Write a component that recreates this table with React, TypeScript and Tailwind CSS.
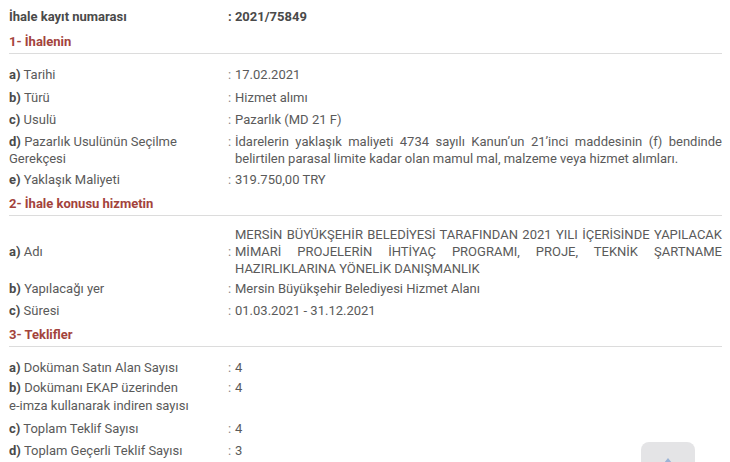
import React from "react";

type Row = {
  key: string;
  label: React.ReactNode;
  extra?: string;
  value: React.ReactNode;
  center?: boolean;
  justify?: boolean;
  cls?: string;
};

const font = { fontFamily: "Roboto, 'Liberation Sans', sans-serif" };

function SectionTitle({ text, cls }: { text: string; cls: string }) {
  return (
    <div className={`border-b border-[#dcdcdc] pb-[3px] text-[13px] font-bold leading-[17px] text-[#a3433c] ${cls}`}>
      {text}
    </div>
  );
}

function InfoRow({ row }: { row: Row }) {
  return (
    <div className={`flex ${row.center ? "items-center" : "items-start"} text-[13px] leading-[17px] text-[#5a5a5a] ${row.cls ?? ""}`}>
      <div className="w-[219px] shrink-0 pr-2">
        <div>
          <span className="font-bold text-[#4a4a4a]">{row.key}</span> {row.label}
        </div>
        {row.extra && <div>{row.extra}</div>}
      </div>
      <div className="w-[6px] shrink-0 text-[#8a8a8a]">:</div>
      <div className={`flex-1 pl-[1px] ${row.justify ? "text-justify" : ""}`}>{row.value}</div>
    </div>
  );
}

const sec1: Row[] = [
  { key: "a)", label: "Tarihi", value: "17.02.2021", cls: "mt-[12px]" },
  { key: "b)", label: "Türü", value: "Hizmet alımı", cls: "mt-[6px]" },
  { key: "c)", label: "Usulü", value: "Pazarlık (MD 21 F)", cls: "mt-[5px]" },
  {
    key: "d)",
    label: "Pazarlık Usulünün Seçilme",
    extra: "Gerekçesi",
    value:
      "İdarelerin yaklaşık maliyeti 4734 sayılı Kanun’un 21’inci maddesinin (f) bendinde belirtilen parasal limite kadar olan mamul mal, malzeme veya hizmet alımları.",
    justify: true,
    cls: "mt-[5px]",
  },
  { key: "e)", label: "Yaklaşık Maliyeti", value: "319.750,00 TRY", cls: "mt-[4px]" },
];

const sec2: Row[] = [
  {
    key: "a)",
    label: "Adı",
    value:
      "MERSİN BÜYÜKŞEHİR BELEDİYESİ TARAFINDAN 2021 YILI İÇERİSİNDE YAPILACAK MİMARİ PROJELERİN İHTİYAÇ PROGRAMI, PROJE, TEKNİK ŞARTNAME HAZIRLIKLARINA YÖNELİK DANIŞMANLIK",
    center: true,
    justify: true,
    cls: "mt-[10px]",
  },
  { key: "b)", label: "Yapılacağı yer", value: "Mersin Büyükşehir Belediyesi Hizmet Alanı", cls: "mt-[3px]" },
  { key: "c)", label: "Süresi", value: "01.03.2021 - 31.12.2021", cls: "mt-[5px]" },
];

const sec3: Row[] = [
  { key: "a)", label: "Doküman Satın Alan Sayısı", value: "4", cls: "mt-[12px]" },
  {
    key: "b)",
    label: "Dokümanı EKAP üzerinden",
    extra: "e-imza kullanarak indiren sayısı",
    value: "4",
    cls: "mt-[3px] leading-[18px]",
  },
  { key: "c)", label: "Toplam Teklif Sayısı", value: "4", cls: "mt-[5px]" },
  { key: "d)", label: "Toplam Geçerli Teklif Sayısı", value: "3", cls: "mt-[5px]" },
];

export default function App() {
  return (
    <div className="relative h-[462px] w-[730px] overflow-hidden bg-white pl-[9px] pr-[8px] pt-[8px]" style={font}>
      <div className="flex text-[13px] font-bold leading-[17px] text-[#4a4a4a]">
        <div className="w-[219px] shrink-0">İhale kayıt numarası</div>
        <div>: 2021/75849</div>
      </div>

      <SectionTitle text="1- İhalenin" cls="mt-[8px]" />
      {sec1.map((r) => (
        <InfoRow key={r.key} row={r} />
      ))}

      <SectionTitle text="2- İhale konusu hizmetin" cls="mt-[7px]" />
      {sec2.map((r) => (
        <InfoRow key={r.key} row={r} />
      ))}

      <SectionTitle text="3- Teklifler" cls="mt-[7px]" />
      <div className="pr-[300px]">
        {sec3.map((r) => (
          <InfoRow key={r.key} row={r} />
        ))}
      </div>

      {/* scroll to top */}
      <div className="absolute left-[641px] top-[442px] flex h-[40px] w-[54px] justify-center rounded-[8px] bg-[#e4e4e6] pt-[15px]">
        <svg width="10" height="12" viewBox="0 0 10 12">
          <path d="M5 1 L9 6 H6 V12 H4 V6 H1 Z" fill="#9db4d6" />
        </svg>
      </div>
    </div>
  );
}
